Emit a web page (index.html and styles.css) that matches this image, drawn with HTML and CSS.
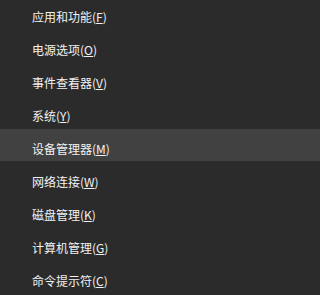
FILE: index.html
```html
<!DOCTYPE html>
<html lang="zh-CN">
<head>
<meta charset="utf-8">
<link rel="stylesheet" href="styles.css">
</head>
<body>
<ul class="menu">
  <li class="item">应用和功能(<u>F</u>)</li>
  <li class="item">电源选项(<u>O</u>)</li>
  <li class="item">事件查看器(<u>V</u>)</li>
  <li class="item">系统(<u>Y</u>)</li>
  <li class="item active">设备管理器(<u>M</u>)</li>
  <li class="item">网络连接(<u>W</u>)</li>
  <li class="item">磁盘管理(<u>K</u>)</li>
  <li class="item">计算机管理(<u>G</u>)</li>
  <li class="item">命令提示符(<u>C</u>)</li>
</ul>
</body>
</html>
```
FILE: styles.css
```css
html, body {
  margin: 0;
  padding: 0;
  background: #2b2b2b;
  height: 100%;
  overflow: hidden;
}
.menu {
  list-style: none;
  margin: -3px 0 0 0;
  padding: 0;
  display: flex;
  flex-direction: column;
}
.item {
  height: 32px;
  margin-bottom: 1px;
  box-sizing: border-box;
  padding: 12px 0 0 32px;
  font-family: "Noto Sans CJK SC", "Noto Sans", sans-serif;
  font-size: 12px;
  line-height: 15px;
  color: #f2f2f2;
  white-space: nowrap;
}
.item u {
  text-decoration: underline;
  text-underline-offset: 1px;
}
.active {
  background: #414141;
}
```
